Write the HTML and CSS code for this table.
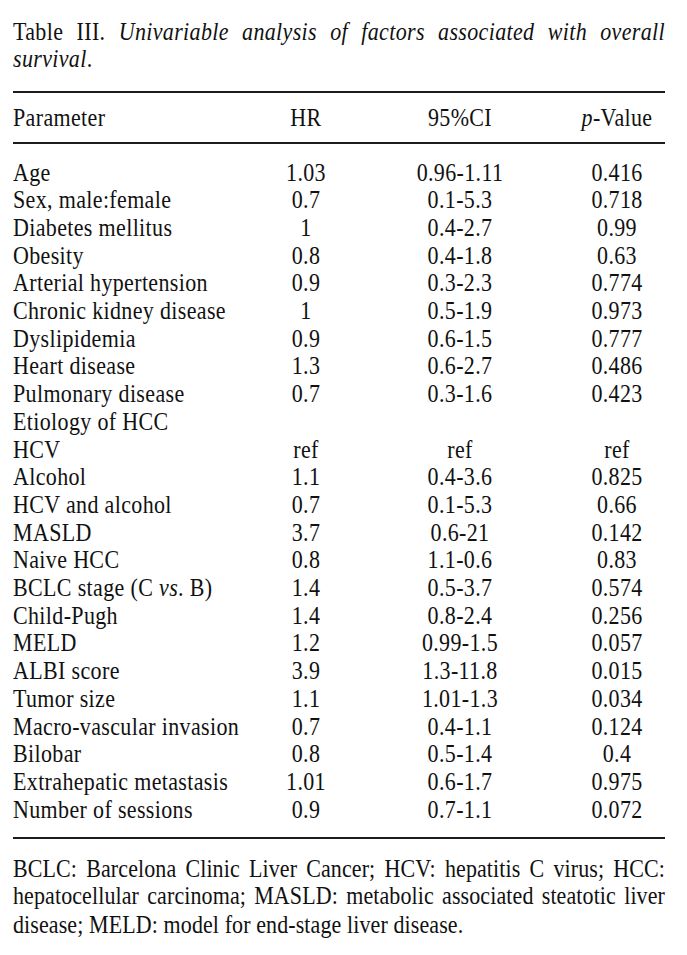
FILE: index.html
```html
<!DOCTYPE html>
<html lang="en">
<head>
<meta charset="utf-8">
<title>Table III</title>
<link rel="stylesheet" href="styles.css">
</head>
<body>
<div class="page">
  <p class="caption">Table III. <em>Univariable analysis of factors associated with overall</em> <em>survival</em>.</p>
  <div class="table">
    <div class="thead">
      <div class="row">
        <span class="c-param">Parameter</span>
        <span class="c-num">HR</span>
        <span class="c-num">95%CI</span>
        <span class="c-num"><em>p</em>-Value</span>
      </div>
    </div>
    <div class="tbody">
      <div class="row"><span class="c-param">Age</span><span class="c-num">1.03</span><span class="c-num">0.96-1.11</span><span class="c-num">0.416</span></div>
      <div class="row"><span class="c-param">Sex, male:female</span><span class="c-num">0.7</span><span class="c-num">0.1-5.3</span><span class="c-num">0.718</span></div>
      <div class="row"><span class="c-param">Diabetes mellitus</span><span class="c-num">1</span><span class="c-num">0.4-2.7</span><span class="c-num">0.99</span></div>
      <div class="row"><span class="c-param">Obesity</span><span class="c-num">0.8</span><span class="c-num">0.4-1.8</span><span class="c-num">0.63</span></div>
      <div class="row"><span class="c-param">Arterial hypertension</span><span class="c-num">0.9</span><span class="c-num">0.3-2.3</span><span class="c-num">0.774</span></div>
      <div class="row"><span class="c-param">Chronic kidney disease</span><span class="c-num">1</span><span class="c-num">0.5-1.9</span><span class="c-num">0.973</span></div>
      <div class="row"><span class="c-param">Dyslipidemia</span><span class="c-num">0.9</span><span class="c-num">0.6-1.5</span><span class="c-num">0.777</span></div>
      <div class="row"><span class="c-param">Heart disease</span><span class="c-num">1.3</span><span class="c-num">0.6-2.7</span><span class="c-num">0.486</span></div>
      <div class="row"><span class="c-param">Pulmonary disease</span><span class="c-num">0.7</span><span class="c-num">0.3-1.6</span><span class="c-num">0.423</span></div>
      <div class="row"><span class="c-param">Etiology of HCC</span><span class="c-num"></span><span class="c-num"></span><span class="c-num"></span></div>
      <div class="row"><span class="c-param">HCV</span><span class="c-num">ref</span><span class="c-num">ref</span><span class="c-num">ref</span></div>
      <div class="row"><span class="c-param">Alcohol</span><span class="c-num">1.1</span><span class="c-num">0.4-3.6</span><span class="c-num">0.825</span></div>
      <div class="row"><span class="c-param">HCV and alcohol</span><span class="c-num">0.7</span><span class="c-num">0.1-5.3</span><span class="c-num">0.66</span></div>
      <div class="row"><span class="c-param">MASLD</span><span class="c-num">3.7</span><span class="c-num">0.6-21</span><span class="c-num">0.142</span></div>
      <div class="row"><span class="c-param">Naive HCC</span><span class="c-num">0.8</span><span class="c-num">1.1-0.6</span><span class="c-num">0.83</span></div>
      <div class="row"><span class="c-param">BCLC stage (C <em>vs</em>. B)</span><span class="c-num">1.4</span><span class="c-num">0.5-3.7</span><span class="c-num">0.574</span></div>
      <div class="row"><span class="c-param">Child-Pugh</span><span class="c-num">1.4</span><span class="c-num">0.8-2.4</span><span class="c-num">0.256</span></div>
      <div class="row"><span class="c-param">MELD</span><span class="c-num">1.2</span><span class="c-num">0.99-1.5</span><span class="c-num">0.057</span></div>
      <div class="row"><span class="c-param">ALBI score</span><span class="c-num">3.9</span><span class="c-num">1.3-11.8</span><span class="c-num">0.015</span></div>
      <div class="row"><span class="c-param">Tumor size</span><span class="c-num">1.1</span><span class="c-num">1.01-1.3</span><span class="c-num">0.034</span></div>
      <div class="row"><span class="c-param">Macro-vascular invasion</span><span class="c-num">0.7</span><span class="c-num">0.4-1.1</span><span class="c-num">0.124</span></div>
      <div class="row"><span class="c-param">Bilobar</span><span class="c-num">0.8</span><span class="c-num">0.5-1.4</span><span class="c-num">0.4</span></div>
      <div class="row"><span class="c-param">Extrahepatic metastasis</span><span class="c-num">1.01</span><span class="c-num">0.6-1.7</span><span class="c-num">0.975</span></div>
      <div class="row"><span class="c-param">Number of sessions</span><span class="c-num">0.9</span><span class="c-num">0.7-1.1</span><span class="c-num">0.072</span></div>
    </div>
  </div>
  <p class="footnote">BCLC: Barcelona Clinic Liver Cancer; HCV: hepatitis C virus; HCC: hepatocellular carcinoma; MASLD: metabolic associated steatotic liver disease; MELD: model for end-stage liver disease.</p>
</div>
</body>
</html>
```

FILE: styles.css
```css
html, body {
  margin: 0;
  padding: 0;
  background: #ffffff;
}

.page {
  width: 652px;
  padding: 18px 22px 40px 13px;
  font-family: "Liberation Serif", "Times New Roman", serif;
  font-size: 22px;
  letter-spacing: 0.35px;
  color: #111111;
}

/* The source typesets a slightly tall Times; stretch glyphs vertically. */
.caption,
.footnote {
  margin: 0;
  text-align: justify;
  transform: scaleY(1.15);
  transform-origin: top left;
}

.caption {
  line-height: 24.4px;
}

.footnote {
  margin-top: 16px;
  line-height: 24.4px;
  letter-spacing: 0.1px;
}

.table {
  margin-top: 24px;
  border-top: 2px solid #1c1c1c;
  border-bottom: 2px solid #1c1c1c;
}

.thead {
  padding: 11px 0 10px;
  border-bottom: 2px solid #1c1c1c;
}

.tbody {
  padding: 15px 0 13.5px;
}

.row {
  display: grid;
  grid-template-columns: 233px 120px 188px 126px;
  line-height: 27.7px;
  white-space: nowrap;
}

.row > span {
  transform: scaleY(1.15);
}

.c-param {
  text-align: left;
}

.c-num {
  text-align: center;
}
```
